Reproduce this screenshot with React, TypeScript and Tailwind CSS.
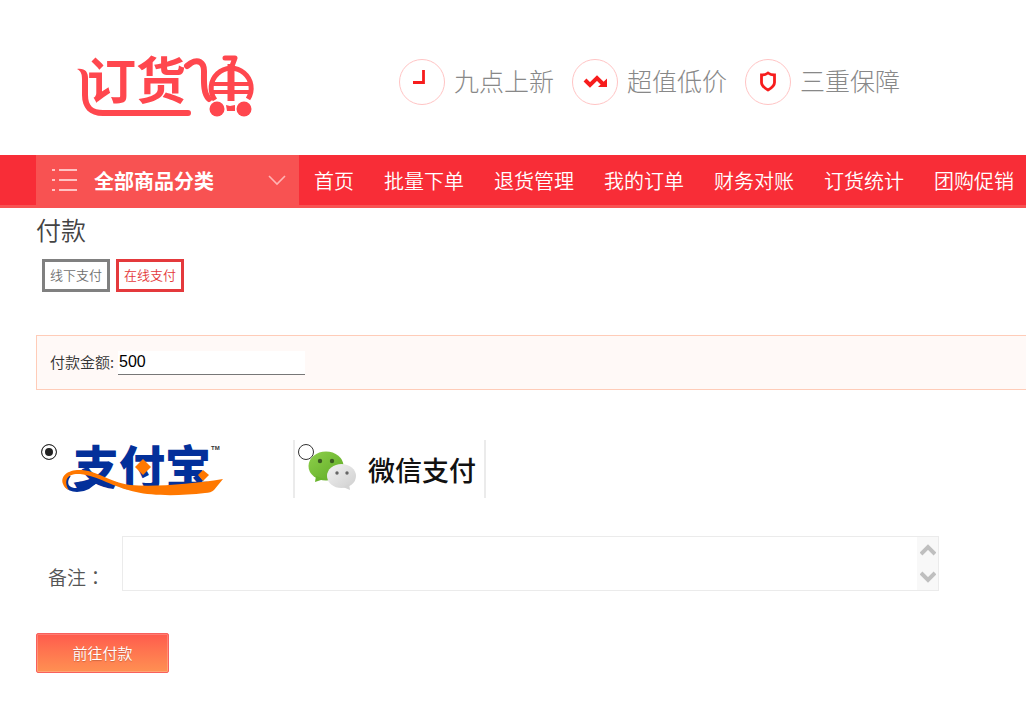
import { useState } from "react";

const navItems = ["首页", "批量下单", "退货管理", "我的订单", "财务对账", "订货统计", "团购促销"];

const methods = ["线下支付", "在线支付"];

function Logo() {
  return (
    <svg viewBox="0 0 180 68" className="w-45 h-17 overflow-visible" role="img" aria-label="订货通">
      <text x="11" y="47" fontSize="49" fontWeight="700" fill="#ff474e" className="font-['Noto_Sans_CJK_SC']">
        订
      </text>
      <text x="60" y="47" fontSize="50" fontWeight="700" fill="#ff474e" className="font-['Noto_Sans_CJK_SC']">
        货
      </text>
      {/* cart frame running under the name */}
      <path
        d="M1 17c8-1 11 3 11 9v17c0 11 5 15 15 15h85a3 3 0 0 1 0 6H27C13 64 6 56 6 43V27c0-5-1-8-5-10z"
        fill="#ff474e"
      />
      {/* handle */}
      <path
        d="M111 14l4-3c7-4 13-1 13 8 0 10-1 22 5 28"
        fill="none"
        stroke="#ff474e"
        strokeWidth="6"
        strokeLinecap="round"
      />
      {/* basket */}
      <g fill="none" stroke="#ff474e">
        <path d="M139 48a20 20 0 1 1 33-1" strokeWidth="5" />
        <path d="M136 32h39M137 40h37" strokeWidth="4" />
        <path d="M155 12v37" strokeWidth="7" />
        <path d="M149 6h10l-3 8" strokeWidth="5" strokeLinecap="round" strokeLinejoin="round" />
      </g>
      <circle cx="141" cy="57" r="9" fill="#fff" />
      <circle cx="168" cy="57" r="9" fill="#fff" />
      <circle cx="141" cy="57" r="7.500" fill="#ff474e" />
      <circle cx="168" cy="57" r="7.500" fill="#ff474e" />
      <path d="M150 53l4 1 5-1v6h-8z" fill="#ff474e" />
    </svg>
  );
}

const slogans = [
  {
    text: "九点上新",
    icon: <path d="M24.500 11v12.500H14" fill="none" stroke="#f71d1d" strokeWidth="2.800" />,
  },
  {
    text: "超值低价",
    icon: (
      <g stroke="#f71d1d" fill="none" strokeWidth="4">
        <path d="M13 21l5 5 7-7 6 6" />
        <path d="M35 19.500v8.500h-9z" fill="#f71d1d" stroke="none" />
      </g>
    ),
  },
  {
    text: "三重保障",
    icon: (
      <path
        d="M23 14c-2 1.500-4 2-6.500 2v7.500c0 3.500 3 5.500 6.500 7.500 3.500-2 6.500-4 6.500-7.500v-7.500c-2.500 0-4.500-.5-6.500-2z"
        fill="none"
        stroke="#f71d1d"
        strokeWidth="2.800"
      />
    ),
  },
];

function AlipayLogo() {
  return (
    <svg viewBox="0 0 168 58" className="w-42 h-[58px] overflow-visible" role="img" aria-label="支付宝">
      <text x="12" y="44" fontSize="46" fontWeight="900" fill="#03309a" className="font-['Noto_Sans_CJK_SC']">
        支付宝
      </text>
      <text x="150" y="10" fontSize="6" fontWeight="700" fill="#333" className="font-['Liberation_Sans']">
        TM
      </text>
      <path d="M8 35C2 44 6 50 16 50c9 0 16-5 22-13" fill="none" stroke="#03309a" strokeWidth="4" />
      <path
        d="M2 44c-3-8 5-14 16-14 18 0 27 11 51 15 26 2 62-1 93-6l-9 11c-2 2-5 3-9 3-25 3-52 3-69-1C51 47 38 36 19 34 6 33 2 41 8 50c-3-1-5-3-6-6z"
        fill="#ff7800"
      />
      <path d="M82 19l8 8-8 8-8-8z" fill="#ff7800" />
      <path d="M142 30l6 5-6 6-5-6z" fill="#ff7800" />
    </svg>
  );
}

function WechatLogo() {
  return (
    <svg viewBox="0 0 189 58" className="w-full h-[58px]" role="img" aria-label="微信支付">
      <defs>
        <linearGradient id="green" x1="0" y1="0" x2="1" y2="1">
          <stop offset="0" stopColor="#8ed04b" />
          <stop offset="1" stopColor="#5eaa24" />
        </linearGradient>
        <linearGradient id="grey" x1="0" y1="0" x2="1" y2="1">
          <stop offset="0" stopColor="#f2f2f2" />
          <stop offset="1" stopColor="#cfcfcf" />
        </linearGradient>
      </defs>
      <ellipse cx="31" cy="26" rx="17.500" ry="14.500" fill="url(#green)" />
      <path d="M21 36l-1 6 9-3z" fill="#69b42c" />
      <circle cx="25" cy="21" r="2.200" fill="#3b5b20" />
      <circle cx="37" cy="21" r="2.200" fill="#3b5b20" />
      <ellipse cx="46.500" cy="36" rx="14.500" ry="12" fill="url(#grey)" />
      <path d="M48 47l7 3-1-6z" fill="#d4d4d4" />
      <circle cx="42" cy="33" r="1.700" fill="#666" />
      <circle cx="52" cy="33" r="1.700" fill="#666" />
      <text x="73" y="41" fontSize="27" fontWeight="500" fill="#111" className="font-['Noto_Sans_CJK_SC']">
        微信支付
      </text>
    </svg>
  );
}

const radioClass =
  "appearance-none size-4 rounded-full border border-[#333] bg-white checked:bg-[#222] checked:shadow-[inset_0_0_0_3px_#fff]";

export default function App() {
  const [method, setMethod] = useState("在线支付");
  const [channel, setChannel] = useState("alipay");
  const [amount, setAmount] = useState("500");
  const [remark, setRemark] = useState("");

  return (
    <div className="min-h-screen w-full overflow-hidden bg-white pb-7 font-['Noto_Sans_CJK_SC',sans-serif] text-[#333]">
      <header className="flex items-start pl-19 pt-13 pb-[35px]">
        <a href="#" className="mr-[143px] shrink-0">
          <Logo />
        </a>
        <ul className="mt-[7px] flex shrink-0 items-center gap-[18px]">
          {slogans.map((s) => (
            <li key={s.text} className="flex items-center gap-[9px] text-[25px] leading-8 font-light text-[#888]">
              <svg viewBox="0 0 46 46" className="size-[46px]">
                <circle cx="23" cy="23" r="22.500" fill="none" stroke="#ffc4c4" />
                {s.icon}
              </svg>
              <span className="pb-1">{s.text}</span>
            </li>
          ))}
        </ul>
      </header>

      <nav className="flex border-b-3 border-[#f85252] bg-[#f82d37] pl-9 text-xl text-white">
        <button className="flex h-[50px] w-[263px] shrink-0 items-center bg-[#f85252] pt-0.5 pl-4 pr-3 font-bold">
          <svg viewBox="0 0 26 26" className="mr-4 size-[26px]" stroke="#ffc2c2" strokeWidth="2">
            <path d="M0 2h3M7 2h18M0 12h3M7 12h18M0 22h3M7 22h18" />
          </svg>
          全部商品分类
          <svg viewBox="0 0 20 12" className="ml-auto h-3 w-5" fill="none" stroke="#ffb4b4" strokeWidth="1.600">
            <path d="M2 1l8 8 8-8" />
          </svg>
        </button>
        {navItems.map((item) => (
          <a key={item} href="#" className="flex h-[50px] shrink-0 items-center px-[15px] pt-0.5 font-[350]">
            {item}
          </a>
        ))}
      </nav>

      <main className="pl-9">
        <h1 className="text-[25px] leading-10 pb-0.5 pt-px font-[350] text-[#444]">付款</h1>

        <div className="mt-2 ml-1.5 flex gap-1.5">
          {methods.map((m) => (
            <button
              key={m}
              onClick={() => setMethod(m)}
              className={
                "h-[33px] w-17 border-3 pb-0.5 text-[13px] leading-5 font-[350] whitespace-nowrap " +
                (m === method ? "border-[#e4393c] text-[#e4393c]" : "border-[#808080] text-[#707070]")
              }
            >
              {m}
            </button>
          ))}
        </div>

        <div className="mt-[43px] flex h-[55px] items-center gap-1 border border-r-0 border-[#ffccb8] bg-[#fff9f7] pl-[13px]">
          <label htmlFor="amount" className="text-[15px] font-[350]">
            付款金额:
          </label>
          <input
            id="amount"
            value={amount}
            onChange={(e) => setAmount(e.target.value)}
            className="h-6 w-[187px] border-b border-[#777] bg-white px-px font-['Liberation_Sans'] text-base text-black outline-none"
          />
        </div>

        <div className="mt-[50px] flex">
          <label className="flex w-[257px] items-start gap-1 pl-[5px]">
            <input
              type="radio"
              name="channel"
              aria-label="支付宝"
              checked={channel === "alipay"}
              onChange={() => setChannel("alipay")}
              className={radioClass + " mt-1"}
            />
            <AlipayLogo />
          </label>
          <label className="relative w-[193px] border-x-2 border-[#ebebeb]">
            <input
              type="radio"
              name="channel"
              aria-label="微信支付"
              checked={channel === "wechat"}
              onChange={() => setChannel("wechat")}
              className={radioClass + " absolute left-[3px] top-1"}
            />
            <WechatLogo />
          </label>
        </div>

        <div className="mt-[38px] mr-[87px] flex items-end pl-3">
          <label htmlFor="remark" className="w-[74px] shrink-0 text-[19px] leading-7 font-[350] whitespace-nowrap text-[#555]">
            备注<span className="font-['Noto_Sans_CJK_TC']">：</span>
          </label>
          <div className="relative flex-1">
            <textarea
              id="remark"
              value={remark}
              onChange={(e) => setRemark(e.target.value)}
              className="block h-[55px] w-full resize-none border border-[#ebebeb] py-1 pl-2 pr-7 text-sm outline-none"
            />
            <div className="absolute inset-y-px right-px flex w-[21px] flex-col items-center justify-between bg-[#f8f8f8] py-1.5">
              <svg viewBox="0 0 16 14" className="w-4 h-3.5" fill="none" stroke="#bfbfbf" strokeWidth="4">
                <path d="M1 11l7-7 7 7" />
              </svg>
              <svg viewBox="0 0 16 14" className="w-4 h-3.5" fill="none" stroke="#bfbfbf" strokeWidth="4">
                <path d="M1 3l7 7 7-7" />
              </svg>
            </div>
          </div>
        </div>

        <button className="mt-[42px] block h-10 w-[133px] rounded-xs border border-[#f9605c] bg-linear-to-b from-[#ff5a4d] to-[#ff9052] text-[15px] font-[350] text-white inset-shadow-[0_0_0_1px_rgba(255,255,255,0.2)] text-shadow-xs">
          前往付款
        </button>
      </main>
    </div>
  );
}
